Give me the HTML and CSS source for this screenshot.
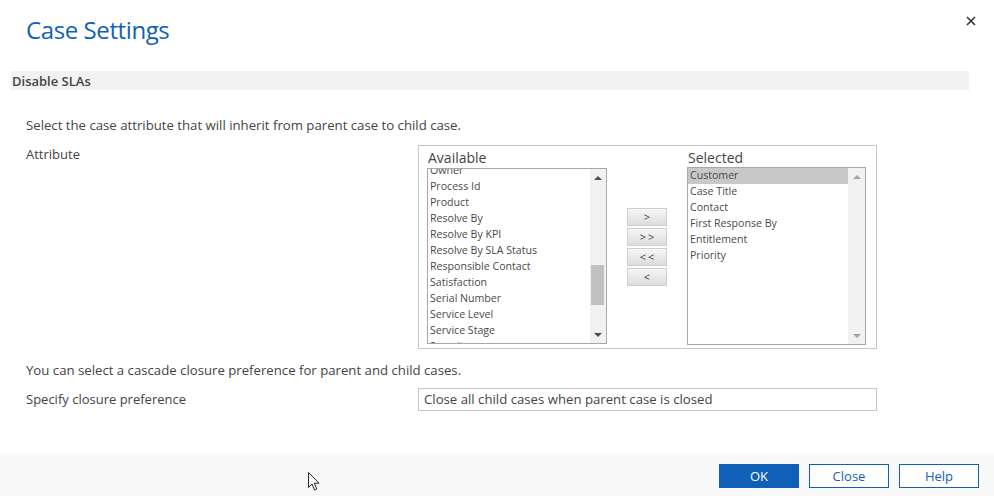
FILE: index.html
```html
<!DOCTYPE html>
<html>
<head>
<meta charset="utf-8">
<link rel="stylesheet" href="styles.css">
</head>
<body>
<div class="dialog">
  <div class="header">
    <h1 class="title">Case Settings</h1>
    <span class="close-x">
      <svg width="10" height="10" viewBox="0 0 10 10"><path d="M1 1 L9 9 M9 1 L1 9" stroke="#333" stroke-width="1.6"/></svg>
    </span>
  </div>
  <div class="section-bar">Disable SLAs</div>
  <div class="content">
    <p class="intro">Select the case attribute that will inherit from parent case to child case.</p>
    <div class="row attr-row">
      <div class="label">Attribute</div>
      <div class="picker">
        <div class="col">
          <div class="col-label">Available</div>
          <div class="listbox avail">
            <div class="items">
              <ul class="items-list scrolled">
                <li>Owner</li>
                <li>Process Id</li>
                <li>Product</li>
                <li>Resolve By</li>
                <li>Resolve By KPI</li>
                <li>Resolve By SLA Status</li>
                <li>Responsible Contact</li>
                <li>Satisfaction</li>
                <li>Serial Number</li>
                <li>Service Level</li>
                <li>Service Stage</li>
                <li>Severity</li>
              </ul>
            </div>
            <div class="scrollbar">
              <span class="arrow up"></span>
              <div class="track"><div class="thumb"></div></div>
              <span class="arrow down"></span>
            </div>
          </div>
        </div>
        <div class="buttons">
          <button class="mv">&gt;</button>
          <button class="mv">&gt;&gt;</button>
          <button class="mv">&lt;&lt;</button>
          <button class="mv">&lt;</button>
        </div>
        <div class="col">
          <div class="col-label">Selected</div>
          <div class="listbox sel">
            <div class="items">
              <ul class="items-list">
                <li class="hl">Customer</li>
                <li>Case Title</li>
                <li>Contact</li>
                <li>First Response By</li>
                <li>Entitlement</li>
                <li>Priority</li>
              </ul>
            </div>
            <div class="scrollbar disabled">
              <span class="arrow up"></span>
              <div class="track"></div>
              <span class="arrow down"></span>
            </div>
          </div>
        </div>
      </div>
    </div>
    <p class="intro second">You can select a cascade closure preference for parent and child cases.</p>
    <div class="row pref-row">
      <div class="label">Specify closure preference</div>
      <div class="select-box">Close all child cases when parent case is closed</div>
    </div>
  </div>
  <div class="footer">
    <button class="btn primary">OK</button>
    <button class="btn">Close</button>
    <button class="btn">Help</button>
  </div>
  <svg class="cursor" width="13" height="20" viewBox="0 0 13 20"><path d="M0.5 0.5 L0.5 15.5 L4 12 L6.5 18 L8.8 17 L6.3 11.2 L11 11.2 Z" fill="#fff" stroke="#222" stroke-width="1"/></svg>
</div>
</body>
</html>
```

FILE: styles.css
```css
* { box-sizing: border-box; }
html, body { margin: 0; padding: 0; }
body {
  width: 994px;
  height: 496px;
  background: #fff;
  font-family: "Segoe UI", "Open Sans", "Noto Sans", sans-serif;
  color: #444;
  overflow: hidden;
}
.dialog {
  position: relative;
  width: 994px;
  height: 496px;
  display: flex;
  flex-direction: column;
}
.header {
  position: relative;
  height: 71px;
  padding: 14px 0 0 26px;
}
.title {
  margin: 0;
  font-weight: 400;
  font-size: 24px;
  line-height: 32px;
  color: #1160b7;
  letter-spacing: -0.4px;
}
.close-x {
  position: absolute;
  top: 16px;
  left: 966px;
  width: 10px;
  height: 10px;
  display: flex;
}
.section-bar {
  margin: 0 25px 0 11px;
  height: 19px;
  background: #f2f2f2;
  font-size: 13px;
  font-weight: 600;
  line-height: 20px;
  padding-left: 1px;
  color: #444;
}
.content {
  flex: 1;
  padding: 26px 0 0 26px;
  font-size: 13px;
}
.intro {
  margin: 0;
  line-height: 18px;
  height: 18px;
  font-size: 13.2px;
}
.row {
  display: flex;
}
.label {
  width: 392px;
  line-height: 18px;
}
.attr-row {
  margin-top: 11px;
}
.picker {
  width: 459px;
  height: 204px;
  border: 1px solid #c6c6c6;
  display: flex;
  padding: 3px 0 0 8px;
}
.col {
  display: flex;
  flex-direction: column;
}
.col-label {
  font-size: 14px;
  line-height: 18px;
  height: 19px;
  padding-left: 1px;
  color: #444;
}
.listbox {
  display: flex;
  border: 1px solid #a8a8a8;
  background: #fff;
}
.listbox.avail {
  width: 180px;
  height: 176px;
}
.listbox.sel {
  width: 179px;
  height: 178px;
  margin-top: -1px;
}
.items {
  flex: 1;
  overflow: hidden;
}
.items-list {
  list-style: none;
  margin: 0;
  padding: 0;
  font-size: 10.6px;
  color: #4a4a4a;
}
.items-list.scrolled {
  margin-top: -6px;
}
.items-list li {
  height: 16px;
  line-height: 14px;
  padding-left: 2px;
  white-space: nowrap;
}
.items-list li.hl {
  background: #c8c8c8;
}
.scrollbar {
  width: 17px;
  display: flex;
  flex-direction: column;
  background: #f1f1f1;
}
.listbox.avail .scrollbar {
  width: 16px;
  background: #f1f1f1;
}
.arrow {
  height: 17px;
  display: flex;
  align-items: center;
  justify-content: center;
}
.arrow::before {
  content: "";
  width: 0;
  height: 0;
  border-left: 4px solid transparent;
  border-right: 4px solid transparent;
}
.arrow.up::before { border-bottom: 4px solid #505050; }
.arrow.down::before { border-top: 4px solid #505050; }
.scrollbar.disabled .arrow.up::before { border-bottom-color: #a3a3a3; }
.scrollbar.disabled .arrow.down::before { border-top-color: #a3a3a3; }
.track {
  flex: 1;
  padding: 79px 2px 0 1px;
}
.thumb {
  height: 40px;
  background: #c1c1c1;
}
.buttons {
  display: flex;
  flex-direction: column;
  gap: 2px;
  margin: 59px 20px 0 20px;
}
.mv {
  width: 40px;
  height: 18px;
  border: 1px solid #cfcfcf;
  background: linear-gradient(#f6f6f6, #dcdcdc);
  font-family: "Segoe UI", "Open Sans", sans-serif;
  font-size: 11px;
  color: #444;
  padding: 0;
  line-height: 14px;
  letter-spacing: 2px;
  text-indent: 2px;
}
.second {
  margin-top: 12px;
}
.pref-row {
  margin-top: 9px;
}
.pref-row .label {
  padding-top: 2px;
}
.select-box {
  width: 459px;
  height: 23px;
  border: 1px solid #c6c6c6;
  line-height: 21px;
  padding-left: 5px;
  font-size: 13.2px;
  color: #444;
}
.footer {
  height: 43px;
  background: #f8f8f8;
  display: flex;
  justify-content: flex-end;
  align-items: flex-start;
  gap: 10px;
  padding: 11px 15px 0 0;
}
.btn {
  width: 80px;
  height: 24px;
  border: 1px solid #1160b7;
  background: #fff;
  color: #1160b7;
  font-family: "Segoe UI", "Open Sans", sans-serif;
  font-size: 13px;
  padding: 0;
}
.btn.primary {
  background: #1160b7;
  color: #fff;
}
.cursor {
  position: absolute;
  left: 308px;
  top: 472px;
}
```
